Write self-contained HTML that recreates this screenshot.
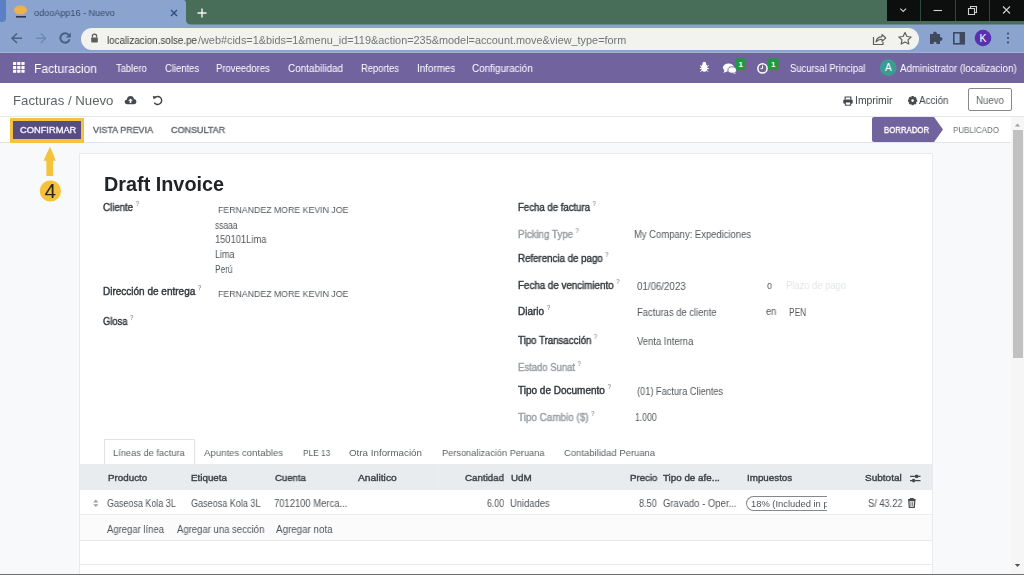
<!DOCTYPE html>
<html><head><meta charset="utf-8">
<style>
*{box-sizing:border-box;margin:0;padding:0}
html,body{width:1024px;height:575px;overflow:hidden;background:#fff;font-family:"Liberation Sans",sans-serif;position:relative}
.a{position:absolute;white-space:nowrap}
.t{will-change:transform}
svg{position:absolute;overflow:visible}
/* chrome */
#tabstrip{left:0;top:0;width:1024px;height:25px;background:#466b57}
#tab{left:0;top:0;width:1024px;height:25px;background:#8aa4cf}
#tabl{left:0;top:0;width:5px;height:24px;background:#5f81c4;border-radius:0 0 4px 0}
#winctl{left:887px;top:0;width:137px;height:21px;background:#0d0f0e}
#toolbar{left:0;top:25px;width:1024px;height:28px;background:#8aa4cf}
#omni{left:81px;top:28px;width:838px;height:22px;background:#f2f3ee;border-radius:11px}
.url{font-size:10.7px;color:#2e3133;top:33px}
/* odoo navbar */
#nav{left:0;top:53px;width:1024px;height:30px;background:#71639e}
.nv{color:#fff;font-size:9.5px;top:63px}
/* control panel */
#cp{left:0;top:83px;width:1024px;height:34px;background:#fff;border-bottom:1px solid #e6e7ea}
#sb{left:0;top:117px;width:1011px;height:26px;background:#fff;border-bottom:1px solid #e3e5e8}
#bg{left:0;top:143px;width:1011px;height:432px;background:#f8f9fa}
#card{left:78.5px;top:152.5px;width:854px;height:440px;background:#fff;border:1px solid #e8eaed}
.lbl{font-size:9.2px;font-weight:bold;color:#3a3f45}
.lbl2{font-size:9.4px;color:#9a9ea3}
.val{font-size:9.4px;color:#4e5358}
.q{font-size:6.5px;color:#6a6e73;position:relative;top:-5px;margin-left:2.5px;font-weight:normal;-webkit-text-stroke:0}
.th{font-size:9.1px;font-weight:bold;color:#3d4247;top:473px}
.td{font-size:9.1px;color:#4b5055;top:498px}
</style></head><body>
<!-- ============ CHROME ============ -->
<div class="a" id="tabstrip"></div>
<div class="a" id="tab"></div>
<svg style="left:0;top:0" width="1024" height="26">
  <path d="M186 0 L1024 0 L1024 24.6 L191 24.6 Q186 24.6 186 19.6 L186 3 Q186 0 183 0Z" fill="#486e59"/>
  <path d="M0 0 L6 0 L6 18 Q6 22 2 22 L0 22Z" fill="#5c80c6"/>
</svg>
<!-- favicon -->
<svg style="left:13px;top:5px" width="16" height="14">
  <ellipse cx="7.5" cy="5" rx="6.5" ry="4.5" fill="#eeb24d"/>
  <rect x="3" y="11" width="10" height="1.6" fill="#2a3552"/>
</svg>
<svg style="left:170px;top:9px" width="8" height="8"><path d="M1 1L7 7M7 1L1 7" stroke="#2e4a80" stroke-width="1.4"/></svg>
<svg style="left:197px;top:7.5px" width="10" height="10"><path d="M5 0.5V9.5M0.5 5H9.5" stroke="#f4f7f4" stroke-width="1.4"/></svg>
<div class="a" id="winctl"></div>
<svg style="left:887px;top:0" width="137" height="21">
  <rect x="33" y="0" width="1" height="21" fill="#2e4a3c"/>
  <rect x="68" y="0" width="1" height="21" fill="#2e4a3c"/>
  <rect x="102" y="0" width="1" height="21" fill="#2e4a3c"/>
  <path d="M13.3 8.6 L16.2 11.5 L19.1 8.6" stroke="#d0d0d0" stroke-width="1.1" fill="none"/>
  <path d="M46.5 10.5 H55" stroke="#d0d0d0" stroke-width="1.1"/>
  <path d="M81.5 8.5 h6 v6 h-6z M83.5 8.5 v-2 h6 v6 h-2" stroke="#d0d0d0" stroke-width="1.1" fill="none"/>
  <path d="M116 6.5 L123 13.5 M123 6.5 L116 13.5" stroke="#d0d0d0" stroke-width="1.1"/>
</svg>
<div class="a" id="toolbar"></div>
<div class="a" style="left:0;top:52px;width:1024px;height:1px;background:#9fb3d6"></div>
<svg style="left:0;top:26px" width="80" height="26">
  <path d="M22 12.3 H12.5 M17 7.5 L12 12.3 L17 17" stroke="#4a6184" stroke-width="1.5" fill="none"/>
  <path d="M36 12.3 H45 M40.8 7.5 L45.6 12.3 L40.8 17" stroke="#6d88b3" stroke-width="1.4" fill="none"/>
  <path d="M68.6 8.9 A4.7 4.7 0 1 0 69.6 13.2" stroke="#4a6184" stroke-width="2" fill="none"/>
  <path d="M70.8 6.6 V11.6 H65.8Z" fill="#4a6184"/>
</svg>
<div class="a" id="omni"></div>
<svg style="left:90px;top:33px" width="9" height="10">
  <path d="M2.3 4.6 V3.4 A2.2 2.2 0 0 1 6.7 3.4 V4.6" stroke="#5b5e5c" stroke-width="1.2" fill="none"/>
  <rect x="1.2" y="4.5" width="6.6" height="5" rx="0.8" fill="#5b5e5c"/>
</svg>
<svg style="left:870px;top:30px" width="50" height="18">
  <path d="M3.5 7 V14.5 H13 V12" stroke="#5c5f5d" stroke-width="1.2" fill="none"/>
  <path d="M6 12 Q6.5 7 12 6.6 V4.5 L15.8 8 L12 11.3 V9.2 Q8 9.2 6 12Z" stroke="#5c5f5d" stroke-width="1.1" fill="none" stroke-linejoin="round"/>
  <path d="M35 2.6 L36.9 6.5 L41.1 7 L38 9.9 L38.8 14 L35 12 L31.2 14 L32 9.9 L28.9 7 L33.1 6.5Z" stroke="#5c5f5d" stroke-width="1.2" fill="none" stroke-linejoin="round"/>
</svg>
<svg style="left:925px;top:28px" width="99" height="22">
  <path d="M5 6 H8 Q8 3.5 10 3.5 Q12 3.5 12 6 H15 V9 Q17.5 9 17.5 11 Q17.5 13 15 13 V16 H11.5 Q11.5 13.8 10 13.8 Q8.5 13.8 8.5 16 H5Z" fill="#3f4a5e"/>
  <rect x="28.8" y="4.8" width="10.4" height="11" fill="none" stroke="#3f4a5e" stroke-width="1.6"/>
  <rect x="34.6" y="4.8" width="4.6" height="11" fill="#3f4a5e"/>
  <circle cx="58" cy="10" r="8.3" fill="#5a30b0"/>
  <text x="58" y="13.6" font-size="10.5" fill="#fff" text-anchor="middle" font-family="Liberation Sans">K</text>
  <circle cx="83" cy="5.5" r="1.1" fill="#3f4a5e"/><circle cx="83" cy="10" r="1.1" fill="#3f4a5e"/><circle cx="83" cy="14.5" r="1.1" fill="#3f4a5e"/>
</svg>

<!-- ============ ODOO NAV ============ -->
<div class="a" id="nav"></div>
<svg style="left:12.5px;top:61.5px" width="12" height="11">
  <g fill="#fff">
  <rect x="0" y="0" width="3.2" height="3" rx="0.4"/><rect x="4.2" y="0" width="3.2" height="3" rx="0.4"/><rect x="8.4" y="0" width="3.2" height="3" rx="0.4"/>
  <rect x="0" y="3.9" width="3.2" height="3" rx="0.4"/><rect x="4.2" y="3.9" width="3.2" height="3" rx="0.4"/><rect x="8.4" y="3.9" width="3.2" height="3" rx="0.4"/>
  <rect x="0" y="7.8" width="3.2" height="3" rx="0.4"/><rect x="4.2" y="7.8" width="3.2" height="3" rx="0.4"/><rect x="8.4" y="7.8" width="3.2" height="3" rx="0.4"/>
  </g>
</svg>
<svg style="left:698px;top:57px" width="84" height="18">
  <!-- bug -->
  <g fill="#fff">
    <ellipse cx="6.3" cy="10.8" rx="3" ry="4"/>
    <circle cx="6.3" cy="6.6" r="1.8"/>
    <path d="M2 8.5 L4 9.8 M10.6 8.5 L8.6 9.8 M1.8 11.5 H4 M10.8 11.5 H8.6 M2.3 14.6 L4.2 13.2 M10.3 14.6 L8.4 13.2" stroke="#fff" stroke-width="1"/>
  </g>
  <!-- chat -->
  <g fill="#fff">
    <ellipse cx="30.5" cy="10.5" rx="5.6" ry="4"/>
    <path d="M26.5 13 L25.5 16 L29.5 14Z"/>
    <ellipse cx="34.2" cy="13" rx="4.3" ry="3.2" stroke="#71639e" stroke-width="0.9"/>
    <path d="M36.5 15.5 L38 17 L34.5 16Z"/>
  </g>
  <rect x="37.6" y="1.3" width="10.3" height="11.8" rx="2" fill="#1f9b3d"/>
  <text x="42.8" y="10.4" font-size="8" font-weight="bold" fill="#fff" text-anchor="middle" font-family="Liberation Sans">1</text>
  <!-- clock -->
  <circle cx="64.5" cy="11.4" r="4.6" fill="none" stroke="#fff" stroke-width="1.5"/>
  <path d="M64.5 8.6 V11.6 H62.6" stroke="#fff" stroke-width="1" fill="none"/>
  <rect x="70" y="1.3" width="10.6" height="11.8" rx="2" fill="#1f9b3d"/>
  <text x="75.3" y="10.4" font-size="8" font-weight="bold" fill="#fff" text-anchor="middle" font-family="Liberation Sans">1</text>
</svg>
<svg style="left:879px;top:59px" width="18" height="18"><circle cx="9.3" cy="8.6" r="8.4" fill="#3b9d92"/><text x="9.3" y="12.2" font-size="10" fill="#fff" text-anchor="middle" font-family="Liberation Sans">A</text></svg>

<!-- ============ CONTROL PANEL ============ -->
<div class="a" id="cp"></div>
<div class="a" style="left:968px;top:88px;width:44px;height:23px;border:1px solid #86888e;border-radius:2px"></div>

<div class="a" id="sb"></div>
<div class="a" id="bg"></div>
<div class="a" id="card"></div>

<!-- status bar buttons -->
<div class="a" style="left:10px;top:118px;width:74px;height:25px;background:#f4c23c"></div>
<div class="a" style="left:13px;top:121px;width:68px;height:18px;background:#574c84"></div>
<svg style="left:872px;top:117px" width="72" height="25"><path d="M0 2 Q0 0 2 0 L62 0 L71 12.5 L62 25 L2 25 Q0 25 0 23Z" fill="#71639e"/></svg>

<!-- form -->


<!-- tabs -->
<div class="a" style="left:103.5px;top:439px;width:91px;height:26px;background:#fff;border:1px solid #dee2e6;border-bottom:none"></div>

<!-- table -->
<div class="a" style="left:79.5px;top:464px;width:852.5px;height:26px;background:#e9ecef"></div>
<div class="a" style="left:438px;top:466px;width:1px;height:22px;background:#eceff2"></div>

<div class="a" style="left:746px;top:496px;width:81px;height:15px;border:1px solid #85888c;border-right:none;border-radius:8px 0 0 8px"></div>
<div class="a" style="left:80px;top:514px;width:852px;height:26px;background:#fbfbfc;border-top:1px solid #eceef0"></div>
<div class="a" style="left:80px;top:540px;width:852px;height:1px;background:#e8eaed"></div>
<div class="a" style="left:80px;top:564px;width:852px;height:1px;background:#e8eaed"></div>

<!-- scrollbar -->
<div class="a" style="left:1011px;top:117px;width:13px;height:457px;background:#f6f6f6"></div>
<svg style="left:1011px;top:117px" width="13" height="457"><path d="M3.8 9.4 L6.5 6.4 L9.2 9.4Z" fill="#a3a3a3"/><path d="M3.8 447 L6.5 450 L9.2 447Z" fill="#505050"/></svg>
<div class="a" style="left:1013px;top:130px;width:10px;height:228px;background:#c1c1c1"></div>
<div class="a" style="left:0;top:574px;width:1024px;height:1px;background:#6e6e6e"></div>

<!-- control panel icons -->
<svg style="left:124px;top:95px" width="13" height="10">
  <path d="M3 9.2 Q0.6 9.2 0.6 6.8 Q0.6 4.6 2.9 4.4 Q3.4 1 6.6 1 Q9.4 1 10 3.9 Q12.4 4.2 12.4 6.6 Q12.4 9.2 9.8 9.2Z" fill="#45494d"/>
  <path d="M6.5 3.4 L8.8 5.8 H7.3 V8 H5.7 V5.8 H4.2Z" fill="#fff"/>
</svg>
<svg style="left:152px;top:95px" width="11" height="11">
  <path d="M2.4 3.2 A4 4 0 1 1 2.3 7.6" stroke="#45494d" stroke-width="1.5" fill="none"/>
  <path d="M0.8 1 L4.4 1.6 L1.6 4.6Z" fill="#45494d"/>
</svg>
<svg style="left:843px;top:95.5px" width="10" height="10">
  <path d="M2.2 3.6 V1 H7.8 V3.6" stroke="#45494d" stroke-width="1.2" fill="none"/>
  <rect x="0.3" y="3.4" width="9.4" height="4.4" rx="1.2" fill="#45494d"/>
  <rect x="2.3" y="6" width="5.4" height="3.2" fill="#fff" stroke="#45494d" stroke-width="1"/>
</svg>
<svg style="left:907.5px;top:95.5px" width="10" height="10">
  <g transform="translate(4.6 4.6)" fill="#45494d">
   <circle r="3.4"/>
   <rect x="-1.2" y="-4.6" width="2.4" height="9.2"/>
   <rect x="-1.2" y="-4.6" width="2.4" height="9.2" transform="rotate(45)"/>
   <rect x="-1.2" y="-4.6" width="2.4" height="9.2" transform="rotate(90)"/>
   <rect x="-1.2" y="-4.6" width="2.4" height="9.2" transform="rotate(135)"/>
   <circle r="1.3" fill="#fff"/>
  </g>
</svg>
<!-- annotation arrow + 4 -->
<svg style="left:38px;top:144px" width="26" height="62">
  <path d="M12 2.7 Q15 9 17.8 16.7 H15.2 V32 H8.4 V16.7 H5.6 Q8.8 9 12 2.7Z" fill="#f5c23c"/>
  <circle cx="12.4" cy="47" r="10.6" fill="#f5c23c"/>
  <text x="12.2" y="53.8" font-size="20.5" fill="#262626" text-anchor="middle" font-family="Liberation Sans">4</text>
</svg>
<!-- table icons -->
<svg style="left:92px;top:499px" width="8" height="9">
  <path d="M3.8 0.6 L6.4 3.4 H1.2Z M3.8 8 L6.4 5.2 H1.2Z" fill="#9a9da1"/>
</svg>
<svg style="left:909px;top:474px" width="13" height="9">
  <path d="M1 2.4 H11.5 M1 6.6 H11.5" stroke="#45494d" stroke-width="1.1"/>
  <circle cx="7.6" cy="2.4" r="1.8" fill="#45494d"/><circle cx="4.6" cy="6.6" r="1.8" fill="#45494d"/>
</svg>
<svg style="left:907px;top:498px" width="10" height="11">
  <path d="M1 1.6 H8.6 M3.4 1.6 V0.6 H6.2 V1.6" stroke="#45494d" stroke-width="1.1" fill="none"/>
  <path d="M1.8 2.6 H7.8 L7.3 9.4 H2.3Z" fill="none" stroke="#45494d" stroke-width="1.2"/>
  <path d="M3.9 4 V8 M5.7 4 V8" stroke="#45494d" stroke-width="0.8"/>
</svg>
<div class='a t' style='left:33.70px;top:8.70px;font-size:9.3px;line-height:1;font-weight:400;color:#3a4a6c;transform:scaleX(0.9767);transform-origin:0 0;'>odooApp16 - Nuevo</div>
<div class='a t' style='left:107.00px;top:34.59px;font-size:10.6px;line-height:1;font-weight:400;color:#3a3d3f;transform:scaleX(0.9257);transform-origin:0 0;'>localizacion.solse.pe</div>
<div class='a t' style='left:197.50px;top:34.59px;font-size:10.6px;line-height:1;font-weight:400;color:#727577;transform:scaleX(1.0261);transform-origin:0 0;'>/web#cids=1&amp;bids=1&amp;menu_id=119&amp;action=235&amp;model=account.move&amp;view_type=form</div>
<div class='a t' style='left:34.30px;top:62.89px;font-size:12.6px;line-height:1;font-weight:400;color:#ffffff;transform:scaleX(0.9570);transform-origin:0 0;'>Facturacion</div>
<div class='a t' style='left:116.00px;top:63.90px;font-size:10.0px;line-height:1;font-weight:400;color:#ffffff;transform:scaleX(0.9391);transform-origin:0 0;'>Tablero</div>
<div class='a t' style='left:164.50px;top:63.90px;font-size:10.0px;line-height:1;font-weight:400;color:#ffffff;transform:scaleX(0.9439);transform-origin:0 0;'>Clientes</div>
<div class='a t' style='left:216.40px;top:63.90px;font-size:10.0px;line-height:1;font-weight:400;color:#ffffff;transform:scaleX(0.9489);transform-origin:0 0;'>Proveedores</div>
<div class='a t' style='left:288.30px;top:63.90px;font-size:10.0px;line-height:1;font-weight:400;color:#ffffff;transform:scaleX(0.9893);transform-origin:0 0;'>Contabilidad</div>
<div class='a t' style='left:361.00px;top:63.90px;font-size:10.0px;line-height:1;font-weight:400;color:#ffffff;transform:scaleX(0.9365);transform-origin:0 0;'>Reportes</div>
<div class='a t' style='left:416.70px;top:63.90px;font-size:10.0px;line-height:1;font-weight:400;color:#ffffff;transform:scaleX(0.9845);transform-origin:0 0;'>Informes</div>
<div class='a t' style='left:472.40px;top:63.90px;font-size:10.0px;line-height:1;font-weight:400;color:#ffffff;transform:scaleX(0.9853);transform-origin:0 0;'>Configuración</div>
<div class='a t' style='left:790.00px;top:63.90px;font-size:10.0px;line-height:1;font-weight:400;color:#ffffff;transform:scaleX(0.9421);transform-origin:0 0;'>Sucursal Principal</div>
<div class='a t' style='left:900.00px;top:63.90px;font-size:10.0px;line-height:1;font-weight:400;color:#ffffff;transform:scaleX(0.9714);transform-origin:0 0;'>Administrator (localizacion)</div>
<div class='a t' style='left:12.70px;top:93.98px;font-size:13.2px;line-height:1;font-weight:400;color:#5e6368;'>Facturas / Nuevo</div>
<div class='a t' style='left:855.20px;top:95.56px;font-size:10.4px;line-height:1;font-weight:400;color:#40454a;transform:scaleX(0.9934);transform-origin:0 0;'>Imprimir</div>
<div class='a t' style='left:919.00px;top:95.56px;font-size:10.4px;line-height:1;font-weight:400;color:#40454a;transform:scaleX(0.9418);transform-origin:0 0;'>Acción</div>
<div class='a t' style='left:976.00px;top:95.56px;font-size:10.4px;line-height:1;font-weight:400;color:#62656d;transform:scaleX(0.9314);transform-origin:0 0;'>Nuevo</div>
<div class='a t' style='left:19.50px;top:125.89px;font-size:9.3px;line-height:1;font-weight:400;color:#f4f2fa;-webkit-text-stroke:0.4px currentColor;'>CONFIRMAR</div>
<div class='a t' style='left:93.40px;top:125.89px;font-size:9.3px;line-height:1;font-weight:400;color:#65696e;-webkit-text-stroke:0.4px currentColor;transform:scaleX(0.9621);transform-origin:0 0;'>VISTA PREVIA</div>
<div class='a t' style='left:171.00px;top:125.89px;font-size:9.3px;line-height:1;font-weight:400;color:#65696e;-webkit-text-stroke:0.4px currentColor;transform:scaleX(0.9682);transform-origin:0 0;'>CONSULTAR</div>
<div class='a t' style='left:884.00px;top:125.98px;font-size:9.2px;line-height:1;font-weight:400;color:#ffffff;-webkit-text-stroke:0.4px currentColor;transform:scaleX(0.8502);transform-origin:0 0;'>BORRADOR</div>
<div class='a t' style='left:953.00px;top:125.98px;font-size:9.2px;line-height:1;font-weight:400;color:#6f7378;transform:scaleX(0.8651);transform-origin:0 0;'>PUBLICADO</div>
<div class='a t' style='left:103.70px;top:174.74px;font-size:19.6px;line-height:1;font-weight:700;color:#202428;transform:scaleX(1.0116);transform-origin:0 0;'>Draft Invoice</div>
<div class='a t' style='left:103.30px;top:203.30px;font-size:10px;line-height:1;font-weight:400;color:#32373c;-webkit-text-stroke:0.4px currentColor;transform:scaleX(0.9670);transform-origin:0 0;'>Cliente<span class='q'>?</span></div>
<div class='a t' style='left:218.00px;top:205.03px;font-size:9.5px;line-height:1;font-weight:400;color:#52575c;transform:scaleX(0.9218);transform-origin:0 0;'>FERNANDEZ MORE KEVIN JOE</div>
<div class='a t' style='left:215.00px;top:220.60px;font-size:10px;line-height:1;font-weight:400;color:#52575c;transform:scaleX(0.8431);transform-origin:0 0;'>ssaaa</div>
<div class='a t' style='left:215.00px;top:235.30px;font-size:10px;line-height:1;font-weight:400;color:#52575c;transform:scaleX(0.9338);transform-origin:0 0;'>150101Lima</div>
<div class='a t' style='left:215.00px;top:249.70px;font-size:10px;line-height:1;font-weight:400;color:#52575c;transform:scaleX(0.8997);transform-origin:0 0;'>Lima</div>
<div class='a t' style='left:215.20px;top:264.50px;font-size:10px;line-height:1;font-weight:400;color:#52575c;transform:scaleX(0.8285);transform-origin:0 0;'>Perú</div>
<div class='a t' style='left:103.00px;top:287.00px;font-size:10px;line-height:1;font-weight:400;color:#32373c;-webkit-text-stroke:0.4px currentColor;'>Dirección de entrega<span class='q'>?</span></div>
<div class='a t' style='left:218.00px;top:288.93px;font-size:9.5px;line-height:1;font-weight:400;color:#52575c;transform:scaleX(0.9218);transform-origin:0 0;'>FERNANDEZ MORE KEVIN JOE</div>
<div class='a t' style='left:103.00px;top:316.50px;font-size:10px;line-height:1;font-weight:400;color:#32373c;-webkit-text-stroke:0.4px currentColor;transform:scaleX(0.9379);transform-origin:0 0;'>Glosa<span class='q'>?</span></div>
<div class='a t' style='left:518.00px;top:202.60px;font-size:10px;line-height:1;font-weight:400;color:#32373c;-webkit-text-stroke:0.4px currentColor;transform:scaleX(0.9594);transform-origin:0 0;'>Fecha de factura<span class='q'>?</span></div>
<div class='a t' style='left:518.00px;top:230.10px;font-size:10px;line-height:1;font-weight:400;color:#999da2;-webkit-text-stroke:0.4px currentColor;transform:scaleX(0.9732);transform-origin:0 0;'>Picking Type<span class='q'>?</span></div>
<div class='a t' style='left:633.70px;top:229.80px;font-size:10px;line-height:1;font-weight:400;color:#52575c;transform:scaleX(0.9440);transform-origin:0 0;'>My Company: Expediciones</div>
<div class='a t' style='left:518.00px;top:254.30px;font-size:10px;line-height:1;font-weight:400;color:#32373c;-webkit-text-stroke:0.4px currentColor;transform:scaleX(0.9704);transform-origin:0 0;'>Referencia de pago<span class='q'>?</span></div>
<div class='a t' style='left:518.00px;top:280.70px;font-size:10px;line-height:1;font-weight:400;color:#32373c;-webkit-text-stroke:0.4px currentColor;transform:scaleX(0.9772);transform-origin:0 0;'>Fecha de vencimiento<span class='q'>?</span></div>
<div class='a t' style='left:636.50px;top:281.90px;font-size:10px;line-height:1;font-weight:400;color:#52575c;transform:scaleX(0.9730);transform-origin:0 0;'>01/06/2023</div>
<div class='a t' style='left:766.50px;top:280.80px;font-size:10px;line-height:1;font-weight:400;color:#52575c;transform:scaleX(0.8989);transform-origin:0 0;'>o</div>
<div class='a t' style='left:786.00px;top:281.30px;font-size:10px;line-height:1;font-weight:400;color:#e3e5e8;transform:scaleX(0.9384);transform-origin:0 0;'>Plazo de pago</div>
<div class='a t' style='left:518.00px;top:306.80px;font-size:10px;line-height:1;font-weight:400;color:#32373c;-webkit-text-stroke:0.4px currentColor;'>Diario<span class='q'>?</span></div>
<div class='a t' style='left:636.50px;top:308.30px;font-size:10px;line-height:1;font-weight:400;color:#52575c;transform:scaleX(0.9410);transform-origin:0 0;'>Facturas de cliente</div>
<div class='a t' style='left:765.60px;top:306.80px;font-size:10px;line-height:1;font-weight:400;color:#52575c;transform:scaleX(0.9350);transform-origin:0 0;'>en</div>
<div class='a t' style='left:788.50px;top:308.30px;font-size:10px;line-height:1;font-weight:400;color:#52575c;transform:scaleX(0.8316);transform-origin:0 0;'>PEN</div>
<div class='a t' style='left:518.00px;top:335.80px;font-size:10px;line-height:1;font-weight:400;color:#32373c;-webkit-text-stroke:0.4px currentColor;transform:scaleX(0.9673);transform-origin:0 0;'>Tipo Transacción<span class='q'>?</span></div>
<div class='a t' style='left:636.50px;top:337.30px;font-size:10px;line-height:1;font-weight:400;color:#52575c;transform:scaleX(0.9463);transform-origin:0 0;'>Venta Interna</div>
<div class='a t' style='left:518.00px;top:363.30px;font-size:10px;line-height:1;font-weight:400;color:#999da2;-webkit-text-stroke:0.4px currentColor;transform:scaleX(0.9493);transform-origin:0 0;'>Estado Sunat<span class='q'>?</span></div>
<div class='a t' style='left:518.00px;top:385.70px;font-size:10px;line-height:1;font-weight:400;color:#32373c;-webkit-text-stroke:0.4px currentColor;'>Tipo de Documento<span class='q'>?</span></div>
<div class='a t' style='left:636.50px;top:387.10px;font-size:10px;line-height:1;font-weight:400;color:#52575c;transform:scaleX(0.9221);transform-origin:0 0;'>(01) Factura Clientes</div>
<div class='a t' style='left:518.00px;top:413.00px;font-size:10px;line-height:1;font-weight:400;color:#999da2;-webkit-text-stroke:0.4px currentColor;transform:scaleX(0.9899);transform-origin:0 0;'>Tipo Cambio ($)<span class='q'>?</span></div>
<div class='a t' style='left:634.70px;top:412.80px;font-size:10px;line-height:1;font-weight:400;color:#52575c;transform:scaleX(0.8631);transform-origin:0 0;'>1.000</div>
<div class='a t' style='left:113.40px;top:448.47px;font-size:9.8px;line-height:1;font-weight:400;color:#5d6267;transform:scaleX(0.9481);transform-origin:0 0;'>Líneas de factura</div>
<div class='a t' style='left:204.30px;top:448.47px;font-size:9.8px;line-height:1;font-weight:400;color:#5d6267;transform:scaleX(0.9810);transform-origin:0 0;'>Apuntes contables</div>
<div class='a t' style='left:303.00px;top:448.47px;font-size:9.8px;line-height:1;font-weight:400;color:#5d6267;transform:scaleX(0.8492);transform-origin:0 0;'>PLE 13</div>
<div class='a t' style='left:349.30px;top:448.47px;font-size:9.8px;line-height:1;font-weight:400;color:#5d6267;'>Otra Información</div>
<div class='a t' style='left:441.50px;top:448.47px;font-size:9.8px;line-height:1;font-weight:400;color:#5d6267;transform:scaleX(0.9407);transform-origin:0 0;'>Personalización Peruana</div>
<div class='a t' style='left:563.70px;top:448.47px;font-size:9.8px;line-height:1;font-weight:400;color:#5d6267;transform:scaleX(0.9665);transform-origin:0 0;'>Contabilidad Peruana</div>
<div class='a t' style='left:107.60px;top:473.47px;font-size:9.8px;line-height:1;font-weight:400;color:#3d4247;-webkit-text-stroke:0.4px currentColor;'>Producto</div>
<div class='a t' style='left:191.00px;top:473.47px;font-size:9.8px;line-height:1;font-weight:400;color:#3d4247;-webkit-text-stroke:0.4px currentColor;'>Etiqueta</div>
<div class='a t' style='left:274.60px;top:473.47px;font-size:9.8px;line-height:1;font-weight:400;color:#3d4247;-webkit-text-stroke:0.4px currentColor;transform:scaleX(0.9746);transform-origin:0 0;'>Cuenta</div>
<div class='a t' style='left:358.00px;top:473.47px;font-size:9.8px;line-height:1;font-weight:400;color:#3d4247;-webkit-text-stroke:0.4px currentColor;transform:scaleX(1.0447);transform-origin:0 0;'>Analitico</div>
<div class='a t' style='left:465.00px;top:473.47px;font-size:9.8px;line-height:1;font-weight:400;color:#3d4247;-webkit-text-stroke:0.4px currentColor;transform:scaleX(0.9942);transform-origin:0 0;'>Cantidad</div>
<div class='a t' style='left:511.00px;top:473.47px;font-size:9.8px;line-height:1;font-weight:400;color:#3d4247;-webkit-text-stroke:0.4px currentColor;transform:scaleX(1.0052);transform-origin:0 0;'>UdM</div>
<div class='a t' style='left:629.60px;top:473.47px;font-size:9.8px;line-height:1;font-weight:400;color:#3d4247;-webkit-text-stroke:0.4px currentColor;transform:scaleX(0.9828);transform-origin:0 0;'>Precio</div>
<div class='a t' style='left:663.30px;top:473.47px;font-size:9.8px;line-height:1;font-weight:400;color:#3d4247;-webkit-text-stroke:0.4px currentColor;'>Tipo de afe...</div>
<div class='a t' style='left:747.00px;top:473.47px;font-size:9.8px;line-height:1;font-weight:400;color:#3d4247;-webkit-text-stroke:0.4px currentColor;'>Impuestos</div>
<div class='a t' style='left:864.70px;top:473.47px;font-size:9.8px;line-height:1;font-weight:400;color:#3d4247;-webkit-text-stroke:0.4px currentColor;transform:scaleX(1.0233);transform-origin:0 0;'>Subtotal</div>
<div class='a t' style='left:107.00px;top:499.30px;font-size:10px;line-height:1;font-weight:400;color:#50555a;transform:scaleX(0.8968);transform-origin:0 0;'>Gaseosa Kola 3L</div>
<div class='a t' style='left:190.50px;top:499.30px;font-size:10px;line-height:1;font-weight:400;color:#50555a;transform:scaleX(0.9059);transform-origin:0 0;'>Gaseosa Kola 3L</div>
<div class='a t' style='left:274.00px;top:499.30px;font-size:10px;line-height:1;font-weight:400;color:#50555a;transform:scaleX(0.9418);transform-origin:0 0;'>7012100 Merca...</div>
<div class='a t' style='left:487.00px;top:499.30px;font-size:10px;line-height:1;font-weight:400;color:#50555a;transform:scaleX(0.8734);transform-origin:0 0;'>6.00</div>
<div class='a t' style='left:510.40px;top:499.30px;font-size:10px;line-height:1;font-weight:400;color:#50555a;transform:scaleX(0.9372);transform-origin:0 0;'>Unidades</div>
<div class='a t' style='left:639.30px;top:499.30px;font-size:10px;line-height:1;font-weight:400;color:#50555a;transform:scaleX(0.9094);transform-origin:0 0;'>8.50</div>
<div class='a t' style='left:663.00px;top:499.30px;font-size:10px;line-height:1;font-weight:400;color:#50555a;transform:scaleX(0.9501);transform-origin:0 0;'>Gravado - Oper...</div>
<div class='a t' style='left:867.50px;top:499.30px;font-size:10px;line-height:1;font-weight:400;color:#50555a;transform:scaleX(0.9261);transform-origin:0 0;'>S/ 43.22</div>
<div class='a t' style='left:751.20px;top:499.11px;font-size:9.4px;line-height:1;font-weight:400;color:#50555a;'>18% (Included in p</div>
<div class='a t' style='left:107.00px;top:524.50px;font-size:10px;line-height:1;font-weight:400;color:#50555a;transform:scaleX(0.9494);transform-origin:0 0;'>Agregar línea</div>
<div class='a t' style='left:177.00px;top:524.50px;font-size:10px;line-height:1;font-weight:400;color:#50555a;transform:scaleX(0.9518);transform-origin:0 0;'>Agregar una sección</div>
<div class='a t' style='left:276.00px;top:524.50px;font-size:10px;line-height:1;font-weight:400;color:#50555a;transform:scaleX(0.9789);transform-origin:0 0;'>Agregar nota</div>
<div class="a" style="left:827px;top:494px;width:30px;height:18px;background:#fff"></div>
</body></html>
